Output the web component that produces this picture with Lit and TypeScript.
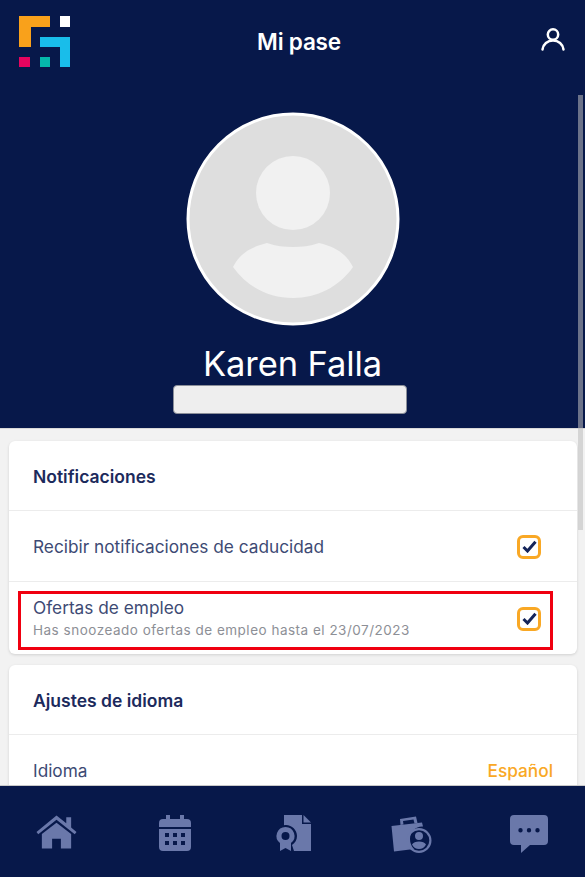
import { LitElement, html, css } from "lit";
import { customElement } from "lit/decorators.js";

@customElement("app-root")
export class AppRoot extends LitElement {
  static styles = css`
    :host {
      display: flex;
      flex-direction: column;
      position: relative;
      width: 585px;
      height: 877px;
      overflow: hidden;
      background: #f2f2f2;
      font-family: Inter, "Noto Sans", sans-serif;
      color: #3d4a74;
    }
    .scroll {
      flex: 1;
      min-height: 0;
      overflow: hidden;
    }
    .hero {
      background: #07184a;
      height: 428px;
      display: flex;
      flex-direction: column;
      align-items: center;
      color: #fff;
      border-bottom: 1px solid #d8d8d8;
    }
    .topbar {
      align-self: stretch;
      box-sizing: border-box;
      height: 112px;
      display: flex;
      justify-content: space-between;
      align-items: flex-start;
      padding: 16px 20px 0 19px;
    }
    .topbar .logo {
      display: block;
    }
    .title {
      font-size: 22.5px;
      font-weight: 600;
      line-height: 26px;
      margin-top: 13px;
      margin-right: 14px;
      letter-spacing: -0.2px;
    }
    .user {
      margin-top: 11px;
    }
    .avatar {
      display: block;
      flex: none;
    }
    .name {
      font-size: 34.5px;
      font-weight: 400;
      line-height: 40px;
      margin-top: 18px;
      letter-spacing: -0.1px;
    }
    .hidden-id {
      width: 234px;
      height: 29px;
      box-sizing: border-box;
      background: #eeeeee;
      border: 1px solid #8b8f99;
      border-radius: 4px;
      margin: 1px 6px 0 0;
    }
    .cards {
      display: flex;
      flex-direction: column;
      gap: 11px;
      padding: 12px 8px 0 9px;
    }
    .card {
      background: #fff;
      border-radius: 6px;
      box-shadow: 0 1px 3px rgba(0, 0, 0, 0.14);
    }
    .row {
      display: flex;
      align-items: center;
      justify-content: space-between;
      padding: 1px 36px 0 24px;
      box-sizing: border-box;
      border-top: 1px solid #ececec;
      height: 71px;
      font-size: 17.25px;
    }
    .row.head {
      border-top: 0;
      height: 69px;
      font-weight: 600;
      color: #1c2a5c;
      font-size: 17.5px;
    }
    .row.tall {
      height: 73px;
    }
    .stack {
      display: flex;
      flex-direction: column;
      gap: 5px;
      margin-top: -2px;
    }
    .sub {
      font-size: 13.5px;
      line-height: 15px;
      letter-spacing: 0.5px;
      color: #8d8f96;
    }
    .main {
      line-height: 20px;
    }
    .check {
      width: 24px;
      height: 24px;
      box-sizing: border-box;
      border: 3px solid #f9a825;
      border-radius: 6px;
      display: flex;
      align-items: center;
      justify-content: center;
    }
    .lang {
      color: #f9a825;
      font-weight: 500;
    }
    .row.last {
      padding-right: 24px;
    }
    .marker {
      position: absolute;
      left: 18px;
      top: 591px;
      width: 535px;
      height: 59px;
      box-sizing: border-box;
      border: 3px solid #f00010;
    }
    .thumb {
      position: absolute;
      left: 578px;
      top: 95px;
      width: 5px;
      height: 435px;
      background: rgba(190, 190, 190, 0.55);
    }
    .tabs {
      flex: none;
      height: 92px;
      box-sizing: border-box;
      background: #07184a;
      border-top: 1px solid #c9c9c9;
      display: grid;
      grid-template-columns: repeat(5, 118px);
      justify-content: center;
      justify-items: center;
      padding-top: 29px;
    }
    .tabs svg {
      fill: #6a78aa;
      display: block;
    }
    .tabs svg.home {
      margin-top: -1px;
    }
  `;

  render() {
    return html`
      <div class="scroll">
        <div class="hero">
          <div class="topbar">
            <svg class="logo" width="52" height="52" viewBox="0 0 52 52">
              <path fill="#f9a11b" d="M0 0h31v11H12v20H0z" />
              <rect fill="#fff" x="41" y="0" width="10" height="11" />
              <path fill="#19bdea" d="M21 21h30v30H41V31H21z" />
              <rect fill="#e6045f" x="0" y="41" width="11" height="10" />
              <rect fill="#05b8ac" x="21" y="41" width="10" height="10" />
            </svg>
            <div class="title">Mi pase</div>
            <svg class="user" width="24" height="24" viewBox="0 0 24 24" fill="none" stroke="#fff" stroke-width="2.5" stroke-linecap="round">
              <circle cx="12" cy="7.500" r="5.200" />
              <path d="M1.500 22.500c.6-5.300 5-9 10.500-9s9.900 3.700 10.500 9" />
            </svg>
          </div>
          <svg class="avatar" width="214" height="214" viewBox="0 0 214 214">
            <circle cx="107" cy="107" r="105" fill="#dedede" stroke="#fff" stroke-width="3" />
            <circle cx="107" cy="81" r="37" fill="#f1f1f1" />
            <path fill="#f1f1f1" d="M47 155c7-14 18-20 34-24 9 3 17 4 26 4s17-1 26-4c16 4 27 10 34 24-14 20-36 31-60 31s-46-11-60-31z" />
          </svg>
          <div class="name">Karen Falla</div>
          <div class="hidden-id"></div>
        </div>
        <div class="cards">
          <div class="card">
            <div class="row head">Notificaciones</div>
            <div class="row">
              <span>Recibir notificaciones de caducidad</span>
              ${this.check()}
            </div>
            <div class="row tall">
              <div class="stack">
                <span class="main">Ofertas de empleo</span>
                <span class="sub">Has snoozeado ofertas de empleo hasta el 23/07/2023</span>
              </div>
              ${this.check()}
            </div>
          </div>
          <div class="card">
            <div class="row head">Ajustes de idioma</div>
            <div class="row last">
              <span>Idioma</span>
              <span class="lang">Español</span>
            </div>
          </div>
        </div>
      </div>
      <div class="tabs">
        <svg class="home" width="41" height="36" viewBox="0 0 42 36">
          <path d="M21 1 31 9V3h5v10.500l5.500 4.500-1.800 2.200L21 5.500 2.300 20.200.5 18z" />
          <path d="M21 8.500 36 20v15H25.500V25h-9v10H6V20z" />
        </svg>
        <svg width="32" height="36" viewBox="0 0 32 36">
          <path fill-rule="evenodd" d="M7 0h4v4h10V0h4v4h3a4 4 0 0 1 4 4v4H0V8a4 4 0 0 1 4-4h3zM0 14h32v18a4 4 0 0 1-4 4H4a4 4 0 0 1-4-4zM6 18v4h4v-4zm8 0v4h4v-4zm8 0v4h4v-4zM6 26v4h4v-4zm8 0v4h4v-4zm8 0v4h4v-4z" />
        </svg>
        <svg width="38" height="36" viewBox="0 0 38 36">
          <path fill-rule="evenodd" d="M10 0h18v9h9v27H20l-2-6c3-2 5-5 5-9 0-6-5-11-11-11-.7 0-1.400.1-2 .2z" />
          <path d="M29.500 0 37 7.500h-7.500z" />
          <path fill-rule="evenodd" d="M11.500 12a9 9 0 0 1 5.500 16.100V36l-5.500-3L6 36v-7.900A9 9 0 0 1 11.500 12zm0 5a4 4 0 1 0 0 8 4 4 0 0 0 0-8z" />
        </svg>
        <svg width="42" height="38" viewBox="0 0 42 38">
          <path d="M1.500 11 32 7.500l1 4C26 11 20 16.500 20 24c0 4 1.500 7.500 4 10L4 36.500z" />
          <path d="M10 4 26 1.500 27.500 8l-3 .5-1-4L13 6l.5 3.500-3 .5z" />
          <path fill-rule="evenodd" d="M29 13a12.500 12.500 0 1 1 0 25 12.500 12.500 0 0 1 0-25zm0 2.200a10.300 10.300 0 1 0 0 20.600 10.300 10.300 0 0 0 0-20.600zm0 1.800a4 4 0 1 1 0 8 4 4 0 0 1 0-8zm-7 12.500c1-2 4-3 7-3s6 1 7 3c-1.500 3-4 4.500-7 4.500s-5.500-1.500-7-4.500z" />
        </svg>
        <svg width="38" height="38" viewBox="0 0 38 38">
          <path fill-rule="evenodd" d="M4 0h30a4 4 0 0 1 4 4v22a4 4 0 0 1-4 4H20l-9 8v-8H4a4 4 0 0 1-4-4V4a4 4 0 0 1 4-4zm6.500 13a2.200 2.200 0 1 0 0 4.400 2.200 2.200 0 0 0 0-4.400zm8.500 0a2.200 2.200 0 1 0 0 4.400 2.200 2.200 0 0 0 0-4.400zm8.500 0a2.200 2.200 0 1 0 0 4.400 2.200 2.200 0 0 0 0-4.400z" />
        </svg>
      </div>
      <div class="marker"></div>
      <div class="thumb"></div>
    `;
  }

  check() {
    return html`
      <span class="check">
        <svg width="15" height="13" viewBox="0 0 15 13">
          <path d="M1.500 7 5.500 11 13.500 1.800" fill="none" stroke="#14245a" stroke-width="3" />
        </svg>
      </span>
    `;
  }
}
